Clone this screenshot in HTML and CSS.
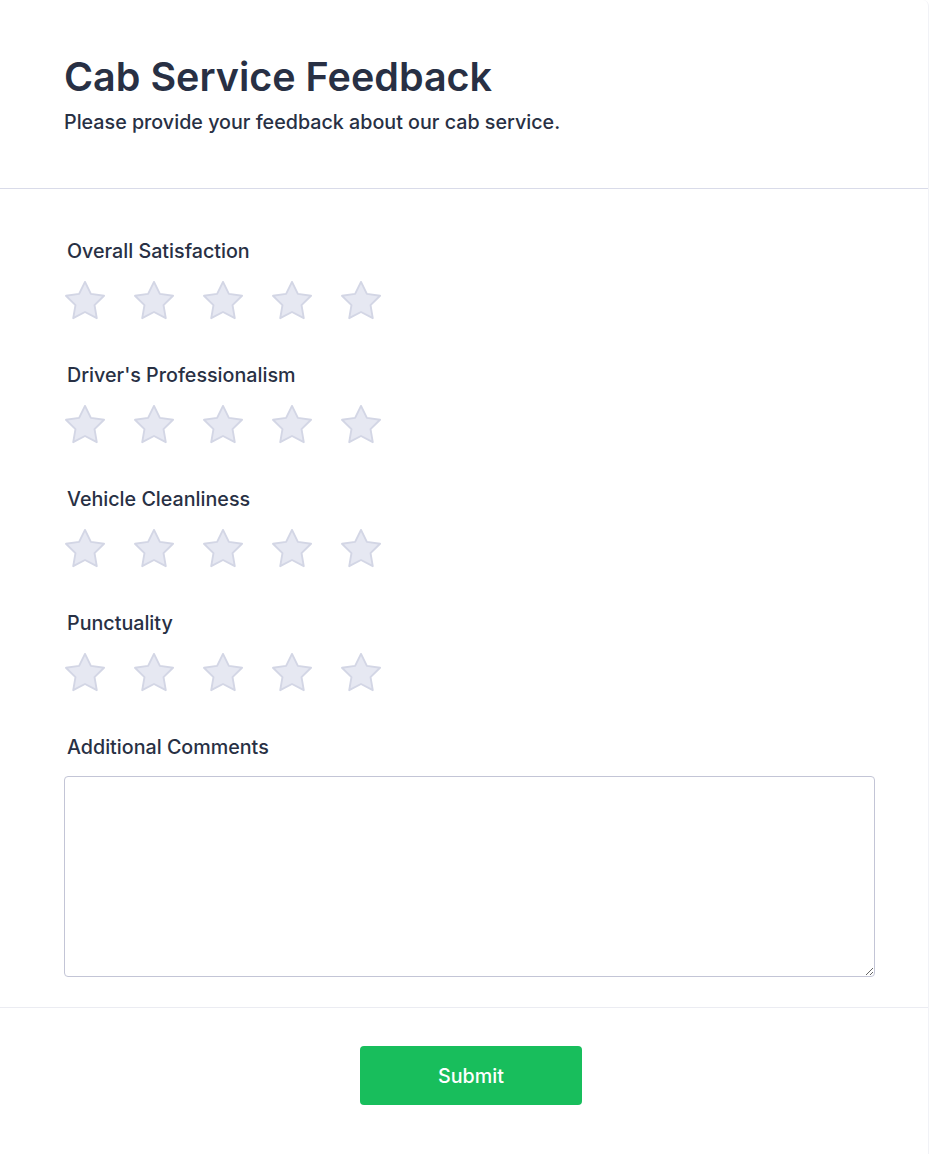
FILE: index.html
```html
<!DOCTYPE html>
<html lang="en">
<head>
<meta charset="utf-8">
<title>Cab Service Feedback</title>
<link rel="stylesheet" href="styles.css">
</head>
<body>
<main class="card">
  <header class="card-header">
    <h1 class="title">Cab Service Feedback</h1>
    <p class="subtitle">Please provide your feedback about our cab service.</p>
  </header>
  <form class="card-body">
    <div class="field">
      <label class="label">Overall Satisfaction</label>
      <div class="stars">
        <svg class="star" viewBox="1.5 1.5 21 21"><polygon points="12 2 15.09 8.26 22 9.27 17 14.14 18.18 21.02 12 17.77 5.82 21.02 7 14.14 2 9.27 8.91 8.26"/></svg>
        <svg class="star" viewBox="1.5 1.5 21 21"><polygon points="12 2 15.09 8.26 22 9.27 17 14.14 18.18 21.02 12 17.77 5.82 21.02 7 14.14 2 9.27 8.91 8.26"/></svg>
        <svg class="star" viewBox="1.5 1.5 21 21"><polygon points="12 2 15.09 8.26 22 9.27 17 14.14 18.18 21.02 12 17.77 5.82 21.02 7 14.14 2 9.27 8.91 8.26"/></svg>
        <svg class="star" viewBox="1.5 1.5 21 21"><polygon points="12 2 15.09 8.26 22 9.27 17 14.14 18.18 21.02 12 17.77 5.82 21.02 7 14.14 2 9.27 8.91 8.26"/></svg>
        <svg class="star" viewBox="1.5 1.5 21 21"><polygon points="12 2 15.09 8.26 22 9.27 17 14.14 18.18 21.02 12 17.77 5.82 21.02 7 14.14 2 9.27 8.91 8.26"/></svg>
      </div>
    </div>
    <div class="field">
      <label class="label">Driver's Professionalism</label>
      <div class="stars">
        <svg class="star" viewBox="1.5 1.5 21 21"><polygon points="12 2 15.09 8.26 22 9.27 17 14.14 18.18 21.02 12 17.77 5.82 21.02 7 14.14 2 9.27 8.91 8.26"/></svg>
        <svg class="star" viewBox="1.5 1.5 21 21"><polygon points="12 2 15.09 8.26 22 9.27 17 14.14 18.18 21.02 12 17.77 5.82 21.02 7 14.14 2 9.27 8.91 8.26"/></svg>
        <svg class="star" viewBox="1.5 1.5 21 21"><polygon points="12 2 15.09 8.26 22 9.27 17 14.14 18.18 21.02 12 17.77 5.82 21.02 7 14.14 2 9.27 8.91 8.26"/></svg>
        <svg class="star" viewBox="1.5 1.5 21 21"><polygon points="12 2 15.09 8.26 22 9.27 17 14.14 18.18 21.02 12 17.77 5.82 21.02 7 14.14 2 9.27 8.91 8.26"/></svg>
        <svg class="star" viewBox="1.5 1.5 21 21"><polygon points="12 2 15.09 8.26 22 9.27 17 14.14 18.18 21.02 12 17.77 5.82 21.02 7 14.14 2 9.27 8.91 8.26"/></svg>
      </div>
    </div>
    <div class="field">
      <label class="label">Vehicle Cleanliness</label>
      <div class="stars">
        <svg class="star" viewBox="1.5 1.5 21 21"><polygon points="12 2 15.09 8.26 22 9.27 17 14.14 18.18 21.02 12 17.77 5.82 21.02 7 14.14 2 9.27 8.91 8.26"/></svg>
        <svg class="star" viewBox="1.5 1.5 21 21"><polygon points="12 2 15.09 8.26 22 9.27 17 14.14 18.18 21.02 12 17.77 5.82 21.02 7 14.14 2 9.27 8.91 8.26"/></svg>
        <svg class="star" viewBox="1.5 1.5 21 21"><polygon points="12 2 15.09 8.26 22 9.27 17 14.14 18.18 21.02 12 17.77 5.82 21.02 7 14.14 2 9.27 8.91 8.26"/></svg>
        <svg class="star" viewBox="1.5 1.5 21 21"><polygon points="12 2 15.09 8.26 22 9.27 17 14.14 18.18 21.02 12 17.77 5.82 21.02 7 14.14 2 9.27 8.91 8.26"/></svg>
        <svg class="star" viewBox="1.5 1.5 21 21"><polygon points="12 2 15.09 8.26 22 9.27 17 14.14 18.18 21.02 12 17.77 5.82 21.02 7 14.14 2 9.27 8.91 8.26"/></svg>
      </div>
    </div>
    <div class="field">
      <label class="label">Punctuality</label>
      <div class="stars">
        <svg class="star" viewBox="1.5 1.5 21 21"><polygon points="12 2 15.09 8.26 22 9.27 17 14.14 18.18 21.02 12 17.77 5.82 21.02 7 14.14 2 9.27 8.91 8.26"/></svg>
        <svg class="star" viewBox="1.5 1.5 21 21"><polygon points="12 2 15.09 8.26 22 9.27 17 14.14 18.18 21.02 12 17.77 5.82 21.02 7 14.14 2 9.27 8.91 8.26"/></svg>
        <svg class="star" viewBox="1.5 1.5 21 21"><polygon points="12 2 15.09 8.26 22 9.27 17 14.14 18.18 21.02 12 17.77 5.82 21.02 7 14.14 2 9.27 8.91 8.26"/></svg>
        <svg class="star" viewBox="1.5 1.5 21 21"><polygon points="12 2 15.09 8.26 22 9.27 17 14.14 18.18 21.02 12 17.77 5.82 21.02 7 14.14 2 9.27 8.91 8.26"/></svg>
        <svg class="star" viewBox="1.5 1.5 21 21"><polygon points="12 2 15.09 8.26 22 9.27 17 14.14 18.18 21.02 12 17.77 5.82 21.02 7 14.14 2 9.27 8.91 8.26"/></svg>
      </div>
    </div>
    <div class="field field-comments">
      <label class="label" for="comments">Additional Comments</label>
      <textarea id="comments" class="comments"></textarea>
    </div>
  </form>
  <footer class="card-footer">
    <button type="button" class="submit">Submit</button>
  </footer>
</main>
</body>
</html>
```
FILE: styles.css
```css
* { box-sizing: border-box; }
html, body { margin: 0; padding: 0; background: #ffffff; }
body {
  font-family: Inter, "Noto Sans", sans-serif;
  color: #283044;
}
.card {
  width: 929px;
  min-height: 1154px;
  background: #fff;
  border-right: 1px solid #f1f2f6;
  border-top-right-radius: 6px;
}
.card-header {
  padding: 54px 64px 0;
  height: 189px;
  border-bottom: 1px solid #d9dbe9;
}
.title {
  margin: 0;
  font-size: 39.5px;
  line-height: 46px;
  font-weight: 600;
  color: #283044;
}
.subtitle {
  margin: 8px 0 0;
  font-size: 19.7px;
  line-height: 28px;
  font-weight: 500;
  color: #283044;
}
.card-body {
  padding: 48px 55px 30px 64px;
  border-bottom: 1px solid #ebecf2;
}
.field { margin-bottom: 36px; }
.label {
  display: block;
  margin-left: 3px;
  font-size: 19.7px;
  line-height: 28px;
  font-weight: 480;
  color: #283044;
}
.stars {
  display: flex;
  align-items: center;
  gap: 29px;
  margin-top: 16px;
  height: 44px;
  padding-left: 1px;
}
.star {
  width: 40px;
  height: 40px;
  margin-top: -4px;
  fill: #e6e8f2;
  stroke: #d3d6e5;
  stroke-width: 1;
  stroke-linejoin: round;
}
.field-comments { margin-bottom: 0; }
.comments {
  display: block;
  margin-top: 15px;
  width: 811px;
  height: 201px;
  border: 1px solid #c3c5d6;
  border-radius: 4px;
  font-family: inherit;
  font-size: 16px;
  resize: vertical;
}
.card-footer {
  display: flex;
  justify-content: center;
  padding: 38px 0 0 0;
}
.submit {
  width: 222px;
  height: 59px;
  margin-left: 14px;
  border: none;
  border-radius: 4px;
  background: #18be5c;
  color: #fff;
  font-family: inherit;
  font-size: 19.7px;
  font-weight: 480;
}
```
